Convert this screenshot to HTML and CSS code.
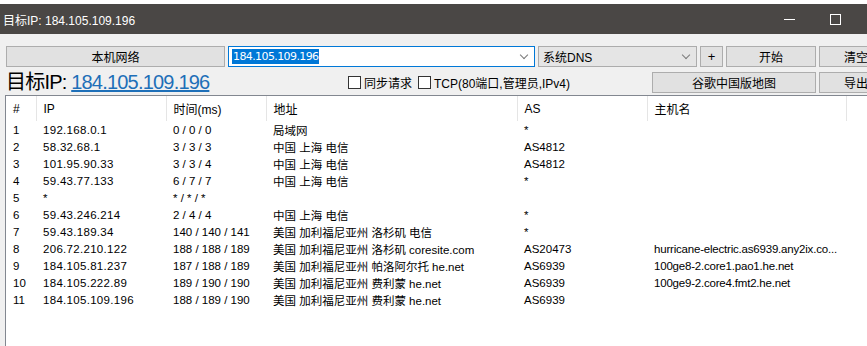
FILE: index.html
```html
<!DOCTYPE html>
<html lang="zh">

<head>
    <meta charset="utf-8">
    <title>目标IP: 184.105.109.196</title>
    <link rel="stylesheet" href="styles.css">
</head>

<body>
    <div class="topstrip"></div>

    <!-- titelbar -->
    <div class="titlebar">
        <span class="title">目标IP: 184.105.109.196</span>
        <span class="winbtn minimize"></span>
        <span class="winbtn maximize"><span class="square"></span></span>
    </div>

    <!-- værktøjslinje -->
    <div class="toolbar">
        <div class="row">
            <button class="btn local">本机网络</button>
            <div class="combo host">
                <span class="selected">184.105.109.196</span>
                <span class="chevron"></span>
            </div>
            <div class="combo dns">
                <span>系统DNS</span>
                <span class="chevron"></span>
            </div>
            <button class="btn plus">+</button>
            <button class="btn start">开始</button>
            <button class="btn clear">清空</button>
        </div>
        <div class="row second">
            <div class="bigip">目标IP: <a href="#">184.105.109.196</a></div>
            <label class="check"><span class="box"></span>同步请求</label>
            <label class="check"><span class="box"></span>TCP(80端口,管理员,IPv4)</label>
            <button class="btn map">谷歌中国版地图</button>
            <button class="btn export">导出</button>
        </div>
    </div>

    <!-- resultat-tabel -->
    <div class="liste">
        <table>
            <colgroup>
                <col style="width:30px">
                <col style="width:130px">
                <col style="width:100px">
                <col style="width:251px">
                <col style="width:130px">
                <col style="width:199px">
                <col style="width:40px">
            </colgroup>
            <thead>
                <tr>
                    <th>#</th>
                    <th>IP</th>
                    <th>时间(ms)</th>
                    <th>地址</th>
                    <th>AS</th>
                    <th>主机名</th>
                    <th class="last"></th>
                </tr>
            </thead>
            <tbody>
                <tr><td>1</td><td class="ip">192.168.0.1</td><td>0 / 0 / 0</td><td>局域网</td><td>*</td><td></td><td></td></tr>
                <tr><td>2</td><td class="ip">58.32.68.1</td><td>3 / 3 / 3</td><td>中国 上海 电信</td><td>AS4812</td><td></td><td></td></tr>
                <tr><td>3</td><td class="ip">101.95.90.33</td><td>3 / 3 / 4</td><td>中国 上海 电信</td><td>AS4812</td><td></td><td></td></tr>
                <tr><td>4</td><td class="ip">59.43.77.133</td><td>6 / 7 / 7</td><td>中国 上海 电信</td><td>*</td><td></td><td></td></tr>
                <tr><td>5</td><td class="ip">*</td><td>* / * / *</td><td></td><td></td><td></td><td></td></tr>
                <tr><td>6</td><td class="ip">59.43.246.214</td><td>2 / 4 / 4</td><td>中国 上海 电信</td><td>*</td><td></td><td></td></tr>
                <tr><td>7</td><td class="ip">59.43.189.34</td><td>140 / 140 / 141</td><td>美国 加利福尼亚州 洛杉矶 电信</td><td>*</td><td></td><td></td></tr>
                <tr><td>8</td><td class="ip">206.72.210.122</td><td>188 / 188 / 189</td><td>美国 加利福尼亚州 洛杉矶 coresite.com</td><td>AS20473</td><td class="hn">hurricane-electric.as6939.any2ix.co...</td><td></td></tr>
                <tr><td>9</td><td class="ip">184.105.81.237</td><td>187 / 188 / 189</td><td>美国 加利福尼亚州 帕洛阿尔托 he.net</td><td>AS6939</td><td class="hn">100ge8-2.core1.pao1.he.net</td><td></td></tr>
                <tr><td>10</td><td class="ip">184.105.222.89</td><td>189 / 190 / 190</td><td>美国 加利福尼亚州 费利蒙 he.net</td><td>AS6939</td><td class="hn">100ge9-2.core4.fmt2.he.net</td><td></td></tr>
                <tr><td>11</td><td class="ip">184.105.109.196</td><td>188 / 189 / 190</td><td>美国 加利福尼亚州 费利蒙 he.net</td><td>AS6939</td><td></td><td></td></tr>
            </tbody>
        </table>
    </div>
</body>

</html>
```

FILE: styles.css
```css
body {
    margin: 0;
    padding: 0;
    width: 867px;
    height: 346px;
    overflow: hidden;
    background-color: #f0f0f0;
    font-family: "Liberation Sans", "Noto Sans CJK SC", sans-serif;
    font-size: 12px;
    color: #000;
}

.topstrip {
    height: 4px;
    background-color: #ffffff;
}

.titlebar {
    height: 30px;
    background-color: #4a4745;
    color: #ffffff;
    display: flex;
    align-items: center;
    padding-left: 3px;
    font-size: 12px;
}

.title {
    flex: 1;
}

.winbtn {
    width: 46px;
    height: 30px;
    display: flex;
    align-items: center;
    justify-content: center;
}

.minimize::before {
    content: "";
    width: 11px;
    height: 1px;
    background-color: #ffffff;
}

.maximize {
    margin-right: 9px;
}

.square {
    width: 9px;
    height: 9px;
    border: 1px solid #ffffff;
}

.toolbar {
    padding: 12px 0 0 6px;
}

.row {
    display: flex;
    gap: 3px;
    width: 900px;
    height: 21px;
    white-space: nowrap;
}

.row.second {
    margin-top: 4px;
    height: 22px;
    align-items: center;
}

.btn {
    flex: none;
    height: 21px;
    border: 1px solid #adadad;
    background-color: #e1e1e1;
    font-family: "Liberation Sans", "Noto Sans CJK SC", sans-serif;
    font-size: 12px;
    padding: 0;
    color: #000;
}

.local {
    width: 219px;
}

.plus {
    width: 23px;
    font-size: 13px;
}

.start {
    width: 90px;
}

.clear,
.export {
    width: 87px;
    text-align: left;
    padding-left: 24px;
}

.combo {
    flex: none;
    height: 21px;
    box-sizing: border-box;
    display: flex;
    align-items: center;
    position: relative;
}

.host {
    width: 307px;
    background-color: #ffffff;
    border: 1px solid #0078d7;
    padding-left: 3px;
    font-family: "DejaVu Sans", sans-serif;
    font-size: 11px;
}

.selected {
    background-color: #0078d7;
    color: #ffffff;
    padding: 1px 1px;
    letter-spacing: -0.6px;
}

.dns {
    width: 159px;
    background-color: #e5e5e5;
    border: 1px solid #acacac;
    padding-left: 4px;
}

.chevron {
    position: absolute;
    right: 7px;
    top: 5px;
    width: 5px;
    height: 5px;
    border-right: 1px solid #7a7a7a;
    border-bottom: 1px solid #7a7a7a;
    transform: rotate(45deg);
}

.bigip {
    flex: none;
    width: 339px;
    font-size: 20px;
    letter-spacing: -0.8px;
    line-height: 22px;
}

.bigip a {
    color: #1e6fb8;
}

.check {
    display: flex;
    align-items: center;
    margin-right: 3px;
}

.box {
    width: 11px;
    height: 11px;
    border: 1px solid #333333;
    background-color: #ffffff;
    margin-right: 3px;
}

.map {
    width: 164px;
    margin-left: auto;
}

.liste {
    margin: 2px 0 0 5px;
    height: 260px;
    background-color: #ffffff;
    border-left: 1px solid #828790;
    border-top: 1px solid #828790;
}

table {
    table-layout: fixed;
    border-collapse: collapse;
    width: 880px;
}

th {
    height: 25px;
    font-weight: normal;
    text-align: left;
    padding: 0 0 0 7px;
    border-right: 1px solid #e5e5e5;
}

th.last {
    border-right: none;
}

td {
    height: 17px;
    padding: 0 0 0 7px;
    white-space: nowrap;
    overflow: hidden;
    font-size: 11.5px;
}

td.ip {
    letter-spacing: 0.3px;
}

td.hn {
    letter-spacing: -0.2px;
}
```
